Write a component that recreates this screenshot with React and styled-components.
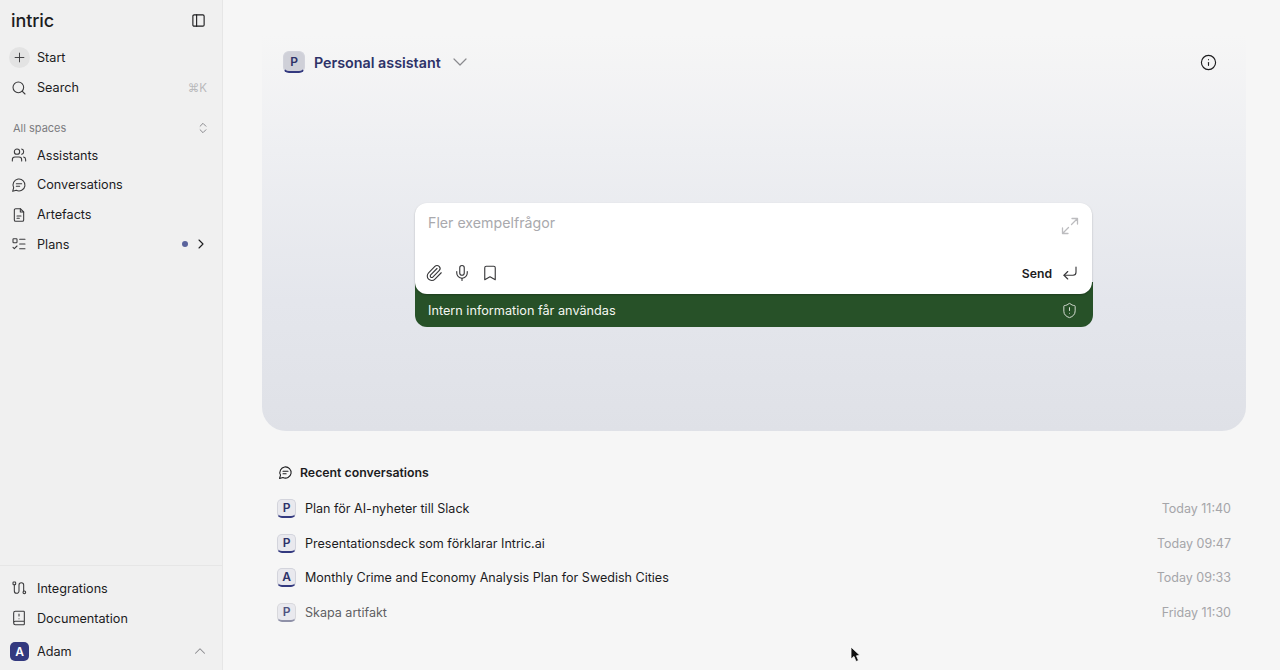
import React from 'react'
import styled, { createGlobalStyle } from 'styled-components'
import {
    BookAlert, Bookmark, ChevronDown, ChevronRight, ChevronUp, ChevronsUpDown, CornerDownLeft,
    Info, ListTodo, Mic, PanelLeft, Paperclip, Plus, Search, ShieldAlert, Users
} from 'lucide-react'

const GlobalStyle = createGlobalStyle`
    html, body { margin: 0; height: 100%; }
    body {
        background: #f6f6f6;
        font-family: Inter, "Liberation Sans", sans-serif;
        color: #1c1c1e;
        overflow: hidden;
    }
`

const Shell = styled.div`
    position: relative;
    display: flex;
    width: 1280px;
    height: 670px;
    overflow: hidden;
`

const Sidebar = styled.aside`
    display: flex;
    flex-direction: column;
    width: 223px;
    height: 670px;
    box-sizing: border-box;
    flex-shrink: 0;
    background: #f0f0f0;
    border-right: 1px solid #e6e6e6;
`

const Brand = styled.div`
    display: flex;
    align-items: center;
    justify-content: space-between;
    height: 40px;
    padding: 0 16px 0 11px;
    color: #1d1d1f;
`

const Logo = styled.span`
    font-size: 18px;
    font-weight: 500;
    letter-spacing: -0.1px;
`

const NavGroup = styled.nav`
    display: flex;
    flex-direction: column;
    padding-top: ${p => p.$top || 0}px;
`

const NavRow = styled.div`
    display: flex;
    align-items: center;
    height: ${p => p.$height || 29.7}px;
    padding: 0 15px 0 11px;
    font-size: 12.65px;
    color: #1c1c1e;
    svg { flex-shrink: 0; }
`

const NavIcon = styled.span`
    display: flex;
    align-items: center;
    justify-content: center;
    width: 16px;
    margin-right: 10px;
    color: #3a3a3c;
`

const PlusBubble = styled.span`
    display: flex;
    align-items: center;
    justify-content: center;
    width: 21px;
    height: 21px;
    margin: 0 7px 0 -2px;
    border-radius: 50%;
    background: #e3e3e3;
    color: #3a3a3c;
`

const Spacer = styled.span`
    flex: 1;
`

const Shortcut = styled.span`
    font-size: 11.5px;
    color: #b9b9bb;
`

const SpaceHeader = styled.div`
    display: flex;
    align-items: center;
    justify-content: space-between;
    height: 24px;
    margin-top: 14px;
    padding: 0 12px 0 13px;
    font-size: 11px;
    color: #7c7c80;
`

const Dot = styled.span`
    width: 6px;
    height: 6px;
    margin-right: 5px;
    border-radius: 50%;
    background: #5a639c;
`

const TrailingChevron = styled.span`
    display: flex;
    margin-right: ${p => p.$shift}px;
`

const SidebarFooter = styled.div`
    margin-top: auto;
    padding-top: 8px;
    padding-bottom: 1px;
    border-top: 1px solid #e6e6e6;
`

const UserBadge = styled.span`
    display: flex;
    align-items: center;
    justify-content: center;
    width: 19px;
    height: 19px;
    margin: 0 8px 0 -1px;
    border-radius: 5px;
    background: #33397f;
    color: #fff;
    font-size: 12px;
    font-weight: 600;
`

const Main = styled.main`
    flex: 1;
    display: flex;
    flex-direction: column;
    padding: 0 34px 0 39px;
    min-width: 0;
`

const Hero = styled.section`
    display: flex;
    flex-direction: column;
    height: 431px;
    box-sizing: border-box;
    padding: 48px 29px 0 21px;
    border-radius: 0 0 24px 24px;
    background: linear-gradient(180deg, #f6f6f6 8%, #eeeff2 35%, #e4e6ec 70%, #dfe1e7 100%);
`

const HeroBar = styled.div`
    display: flex;
    align-items: center;
    height: 28px;
`

const AssistantName = styled.span`
    margin: 0 7px 0 9px;
    font-size: 14.3px;
    font-weight: 600;
    color: #2d3268;
`

const Badge = styled.span`
    display: flex;
    align-items: center;
    justify-content: center;
    flex-shrink: 0;
    box-sizing: border-box;
    width: ${p => p.$size}px;
    height: ${p => p.$size}px;
    padding-bottom: 1px;
    border-radius: ${p => p.$size > 20 ? 6 : 5}px;
    background: ${p => p.$fill};
    border: 1px solid ${p => p.$muted ? '#d8d8dc' : '#d3d4dc'};
    border-bottom: 2px solid ${p => p.$muted ? '#8f91a8' : '#33397f'};
    color: ${p => p.$muted ? '#4f5380' : '#2d3268'};
    font-size: 12px;
    font-weight: 600;
`

const Composer = styled.div`
    align-self: center;
    display: flex;
    flex-direction: column;
    width: 678px;
    margin-top: 127px;
    margin-left: 8px;
`

const InputArea = styled.div`
    position: relative;
    z-index: 1;
    display: flex;
    flex-direction: column;
    height: 91px;
    box-sizing: border-box;
    margin-right: 1px;
    padding: 11px 13px 12px 13px;
    border-radius: 12px;
    background: #fff;
    box-shadow: 0 1px 2px rgba(0, 0, 0, 0.25);
`

const InputTop = styled.div`
    display: flex;
    align-items: flex-start;
    justify-content: space-between;
    flex: 1;
`

const Placeholder = styled.span`
    font-size: 14.2px;
    color: #a9a9ad;
`

const ExpandIcon = styled.svg`
    margin: 3px 0 0 0;
    color: #bcbcbf;
`

const ToolRow = styled.div`
    display: flex;
    align-items: center;
    gap: 10px;
    margin: 0 0 0 -3px;
    color: #38383a;
`

const SendLabel = styled.span`
    margin-right: -1px;
    font-size: 12.2px;
    font-weight: 600;
    color: #1c1c1e;
`

const Notice = styled.div`
    display: flex;
    align-items: center;
    justify-content: space-between;
    height: 45px;
    box-sizing: border-box;
    margin-top: -12px;
    padding: 12px 15px 0 13px;
    border-radius: 0 0 12px 12px;
    background: #275128;
    font-size: 12.7px;
    color: #f4f6f1;
`

const Recent = styled.section`
    display: flex;
    flex-direction: column;
    padding: 30px 15px 0 15px;
`

const RecentTitle = styled.h2`
    display: flex;
    align-items: center;
    gap: 7px;
    height: 22px;
    margin: 0 0 8.4px;
    padding-left: 1px;
    font-size: 12.3px;
    font-weight: 600;
    color: #1c1c1e;
`

const ConversationRow = styled.div`
    display: flex;
    align-items: center;
    height: 34.5px;
    font-size: 12.55px;
    color: ${p => p.$muted ? '#5f5f63' : '#1c1c1e'};
`

const ConversationTitle = styled.span`
    flex: 1;
    margin-left: 9px;
`

const Time = styled.span`
    font-size: 12.5px;
    color: #a5a5a9;
`

const Cursor = styled.svg`
    position: absolute;
    left: 849px;
    top: 646px;
`

// lucide has no close match for these, so they are drawn by hand
const Glyph = ({ size = 16, width = 1.6, children }) => (
    <svg width={size} height={size} viewBox="0 0 24 24" fill="none" stroke="currentColor" strokeWidth={width} strokeLinecap="round" strokeLinejoin="round">
        {children}
    </svg>
)

const BubbleIcon = props => (
    <Glyph {...props}>
        <path d="M7.9 20A9 9 0 1 0 4 16.1L2.5 21.5Z" />
        <path d="M8 10h8M8 14h5" />
    </Glyph>
)

const FileIcon = props => (
    <Glyph {...props}>
        <path d="M14 2.5H7a2 2 0 0 0-2 2v15a2 2 0 0 0 2 2h10a2 2 0 0 0 2-2V7.5Z" />
        <path d="M14 2.5v5h5M9 13.5h6M9 17h3.5" />
    </Glyph>
)

const RouteIcon = props => (
    <Glyph {...props}>
        <rect x="3" y="3" width="4" height="4" rx="1" />
        <circle cx="20" cy="18.5" r="2" />
        <path d="M5 7v9.5a3.5 3.5 0 0 0 7 0v-9a3.5 3.5 0 0 1 7 0v9" />
    </Glyph>
)

const ExpandGlyph = () => (
    <ExpandIcon width="18" height="18" viewBox="0 0 18 18" fill="none" stroke="currentColor" strokeWidth="1.3" strokeLinecap="round" strokeLinejoin="round">
        <path d="M10.5 7.5 16.5 1.5M11 1.5h5.5V7M7.5 10.5l-6 6M1.5 11v5.5H7" />
    </ExpandIcon>
)

const topNav = [
    { label: 'Assistants', icon: Users },
    { label: 'Conversations', icon: BubbleIcon },
    { label: 'Artefacts', icon: FileIcon },
]

const conversations = [
    { badge: 'P', title: 'Plan för AI-nyheter till Slack', time: 'Today 11:40' },
    { badge: 'P', title: 'Presentationsdeck som förklarar Intric.ai', time: 'Today 09:47' },
    { badge: 'A', title: 'Monthly Crime and Economy Analysis Plan for Swedish Cities', time: 'Today 09:33' },
    { badge: 'P', title: 'Skapa artifakt', time: 'Friday 11:30', muted: true },
]

const App = () => (
    <Shell>
        <GlobalStyle />
        <Sidebar>
            <Brand>
                <Logo>intric</Logo>
                <PanelLeft size={15} strokeWidth={1.8} />
            </Brand>

            <NavGroup $top={3}>
                <NavRow>
                    <PlusBubble><Plus size={15} strokeWidth={1.5} /></PlusBubble>
                    Start
                </NavRow>
                <NavRow>
                    <NavIcon><Search size={16} strokeWidth={1.6} /></NavIcon>
                    Search
                    <Spacer />
                    <Shortcut>⌘K</Shortcut>
                </NavRow>
            </NavGroup>

            <SpaceHeader>
                All spaces
                <ChevronsUpDown size={14} strokeWidth={1.5} />
            </SpaceHeader>

            <NavGroup>
                {topNav.map(item => (
                    <NavRow key={item.label}>
                        <NavIcon><item.icon size={16} strokeWidth={1.6} /></NavIcon>
                        {item.label}
                    </NavRow>
                ))}
                <NavRow>
                    <NavIcon><ListTodo size={16} strokeWidth={1.6} /></NavIcon>
                    Plans
                    <Spacer />
                    <Dot />
                    <TrailingChevron $shift={-2}><ChevronRight size={16} strokeWidth={1.6} /></TrailingChevron>
                </NavRow>
            </NavGroup>

            <SidebarFooter>
                <NavRow>
                    <NavIcon><RouteIcon size={16} /></NavIcon>
                    Integrations
                </NavRow>
                <NavRow>
                    <NavIcon><BookAlert size={16} strokeWidth={1.6} /></NavIcon>
                    Documentation
                </NavRow>
                <NavRow $height={36}>
                    <UserBadge>A</UserBadge>
                    Adam
                    <Spacer />
                    <TrailingChevron $shift={-2}><ChevronUp size={18} strokeWidth={1.4} color="#8a8a8e" /></TrailingChevron>
                </NavRow>
            </SidebarFooter>
        </Sidebar>

        <Main>
            <Hero>
                <HeroBar>
                    <Badge $size={22} $fill="#cfd0d8">P</Badge>
                    <AssistantName>Personal assistant</AssistantName>
                    <ChevronDown size={24} strokeWidth={1.2} color="#8a8a8e" />
                    <Spacer />
                    <Info size={17} strokeWidth={1.6} />
                </HeroBar>

                <Composer>
                    <InputArea>
                        <InputTop>
                            <Placeholder>Fler exempelfrågor</Placeholder>
                            <ExpandGlyph />
                        </InputTop>
                        <ToolRow>
                            <Paperclip size={18} strokeWidth={1.5} />
                            <Mic size={18} strokeWidth={1.5} />
                            <Bookmark size={18} strokeWidth={1.5} />
                            <Spacer />
                            <SendLabel>Send</SendLabel>
                            <CornerDownLeft size={18} strokeWidth={1.5} />
                        </ToolRow>
                    </InputArea>
                    <Notice>
                        Intern information får användas
                        <ShieldAlert size={17} strokeWidth={1.4} color="#d7ddd3" />
                    </Notice>
                </Composer>
            </Hero>

            <Recent>
                <RecentTitle>
                    <BubbleIcon size={15} width={1.7} />
                    Recent conversations
                </RecentTitle>
                {conversations.map(item => (
                    <ConversationRow key={item.title} $muted={item.muted}>
                        <Badge $size={19} $fill="#e9e9ee" $muted={item.muted}>{item.badge}</Badge>
                        <ConversationTitle>{item.title}</ConversationTitle>
                        <Time>{item.time}</Time>
                    </ConversationRow>
                ))}
            </Recent>
        </Main>

        <Cursor width="14" height="18" viewBox="0 0 14 18">
            <path d="M2 1 L2 13 L5 10.5 L7 15.5 L9.5 14.5 L7.5 9.8 L11 9.5 Z" fill="#111" stroke="#fff" strokeWidth="0.8" />
        </Cursor>
    </Shell>
)

export default App
